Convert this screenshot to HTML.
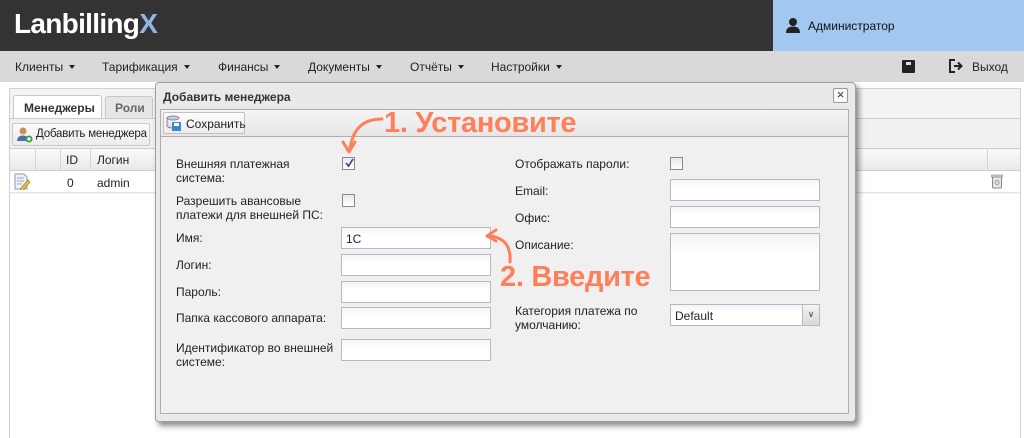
<!DOCTYPE html>
<html><head><meta charset="utf-8"><style>
*{margin:0;padding:0;box-sizing:border-box}
body{width:1024px;height:438px;overflow:hidden;background:#fff;font-family:"Liberation Sans","DejaVu Sans",sans-serif;font-size:12px;color:#222;position:relative}
.a{position:absolute;white-space:nowrap}
.hdr{left:0;top:0;width:1024px;height:51px;background:#333}
.logo{left:14px;top:8px;font-size:28px;font-weight:bold;color:#fff;letter-spacing:-0.7px}
.logo span{color:#8fb6e3}
.user{left:773px;top:0;width:251px;height:51px;background:#a3c8f0}
.nav{left:0;top:51px;width:1024px;height:31px;background:#d9d9d9}
.nav div{position:absolute;top:9px;font-size:12px;color:#222}
.caret{display:inline-block;width:0;height:0;border-left:3px solid transparent;border-right:3px solid transparent;border-top:4px solid #222;margin-left:6px;vertical-align:2px}
.lbl{position:absolute;font-size:12px;color:#222;line-height:14px;white-space:nowrap}
.inp{position:absolute;width:150px;height:22px;background:linear-gradient(#f4f4f4,#fff 40%);border:1px solid #b5b8c8}
.cb{position:absolute;width:13px;height:13px;border:1px solid #8a8a8a;background:linear-gradient(#e8e8e8,#fff)}
.ann{position:absolute;color:#ff7f5a;font-size:29px;font-weight:bold;font-family:"Liberation Sans",sans-serif;letter-spacing:-0.3px;line-height:1;white-space:nowrap}
</style></head><body>
<div class="a hdr"></div>
<div class="a logo">Lanbilling<span>X</span></div>
<div class="a user"></div>
<svg class="a" style="left:785px;top:17px" width="16" height="16" viewBox="0 0 16 16"><circle cx="8" cy="5" r="4" fill="#222"/><path d="M1 16c0-5 3-6.5 7-6.5s7 1.5 7 6.5z" fill="#222"/></svg>
<div class="a" style="left:808px;top:19px;font-size:12px;color:#111">Администратор</div>
<div class="a nav">
<div style="left:15px">Клиенты<span class="caret"></span></div>
<div style="left:102px">Тарификация<span class="caret"></span></div>
<div style="left:218px">Финансы<span class="caret"></span></div>
<div style="left:308px">Документы<span class="caret"></span></div>
<div style="left:410px">Отчёты<span class="caret"></span></div>
<div style="left:491px">Настройки<span class="caret"></span></div>
<div style="left:972px">Выход</div>
</div>
<div class="a" style="left:902px;top:60px;width:13px;height:13px;background:#222;border-radius:1px"></div>
<div class="a" style="left:906px;top:62px;width:5px;height:3px;background:#ddd"></div>
<svg class="a" style="left:948px;top:59px" width="16" height="14" viewBox="0 0 16 14"><path d="M7 1H2v12h5" fill="none" stroke="#222" stroke-width="2"/><path d="M6 7h6M10 3.5l3.5 3.5-3.5 3.5" fill="none" stroke="#222" stroke-width="2"/></svg>

<div class="a" style="left:9px;top:88px;width:1012px;height:350px;border:1px solid #d0d0d0;border-bottom:none;background:#f3f3f3"></div>
<div class="a" style="left:13px;top:95px;width:89px;height:24px;background:#fff;border:1px solid #c8c8c8;border-bottom:none;border-radius:3px 3px 0 0;font-weight:bold;font-size:12px;padding:5px 0 0 10px;color:#333">Менеджеры</div>
<div class="a" style="left:105px;top:96px;width:48px;height:22px;background:#e6e6e6;border:1px solid #c8c8c8;border-bottom:none;border-radius:3px 3px 0 0;font-weight:bold;font-size:12px;padding:4px 0 0 9px;color:#666">Роли</div>
<div class="a" style="left:10px;top:118px;width:1010px;height:30px;background:#f1f1f1;border-top:1px solid #ccc"></div>
<div class="a" style="left:12px;top:123px;width:138px;height:23px;border:1px solid #c8c8c8;border-radius:2px;background:linear-gradient(#fbfbfb,#ececec);padding:4px 0 0 23px;font-size:11.5px;letter-spacing:-0.2px">Добавить менеджера</div>
<svg class="a" style="left:16px;top:126px" width="17" height="17" viewBox="0 0 17 17"><circle cx="7" cy="5" r="3.5" fill="#c8905a"/><path d="M1 15c0-4 3-5.5 6-5.5s6 1.5 6 5.5z" fill="#4a6fa5"/><circle cx="13" cy="13" r="3.5" fill="#3aa03a"/><path d="M13 11v4M11 13h4" stroke="#fff" stroke-width="1.3"/></svg>
<div class="a" style="left:10px;top:148px;width:1010px;height:23px;background:linear-gradient(#fafafa,#e9e9e9);border-top:1px solid #ccc;border-bottom:1px solid #d0d0d0"></div>
<div class="a" style="left:35px;top:149px;width:1px;height:22px;background:#d4d4d4"></div>
<div class="a" style="left:60px;top:149px;width:1px;height:22px;background:#d4d4d4"></div>
<div class="a" style="left:90px;top:149px;width:1px;height:22px;background:#d4d4d4"></div>
<div class="a" style="left:987px;top:149px;width:1px;height:22px;background:#d4d4d4"></div>
<div class="a" style="left:66px;top:153px">ID</div>
<div class="a" style="left:97px;top:153px">Логин</div>
<div class="a" style="left:10px;top:171px;width:1010px;height:22px;background:#fff;border-bottom:1px solid #e4e4e4"></div>
<div class="a" style="left:10px;top:194px;width:1010px;height:244px;background:#fff"></div>
<svg class="a" style="left:14px;top:173px" width="16" height="17" viewBox="0 0 16 17"><path d="M1 1h9l3 3v12H1z" fill="#eef2fa" stroke="#8a9ab8"/><path d="M3 5h7M3 8h7M3 11h5" stroke="#9ab"/><path d="M7 15l7-8 2 2-7 8-3 1z" fill="#f0c040" stroke="#a07020" stroke-width=".6"/></svg>
<div class="a" style="left:67px;top:176px">0</div>
<div class="a" style="left:97px;top:176px">admin</div>
<svg class="a" style="left:991px;top:174px" width="12" height="15" viewBox="0 0 12 15"><rect x="1.5" y="3" width="9" height="11" rx="1" fill="#e8e8e8" stroke="#888"/><rect x="0.5" y="1" width="11" height="2" fill="#ccc" stroke="#888" stroke-width=".6"/><circle cx="6" cy="8.5" r="2" fill="none" stroke="#999"/></svg>

<div class="a" style="left:155px;top:82px;width:701px;height:340px;background:#e9e9e9;border:1px solid #a0a0a0;border-radius:4px;box-shadow:3px 4px 6px rgba(0,0,0,.45)"></div>
<div class="a" style="left:163px;top:90px;font-weight:bold;font-size:12px;color:#333">Добавить менеджера</div>
<div class="a" style="left:833px;top:88px;width:15px;height:15px;border:1px solid #999;border-radius:2px;background:#fafafa;font-size:13px;line-height:12px;text-align:center;color:#333">×</div>
<div class="a" style="left:160px;top:109px;width:689px;height:28px;background:linear-gradient(#f5f5f5,#e6e6e6);border:1px solid #b8a8a8;border-bottom:none"></div>
<div class="a" style="left:163px;top:112px;width:82px;height:22px;border:1px solid #c0c0c0;border-radius:2px;background:linear-gradient(#fcfcfc,#ececec);padding:4px 0 0 22px;font-size:12px">Сохранить</div>
<svg class="a" style="left:166px;top:115px" width="16" height="16" viewBox="0 0 16 16"><ellipse cx="7" cy="3" rx="6" ry="2" fill="#ccd" stroke="#889"/><path d="M1 3v8c0 1 3 2 6 2" fill="#dde" stroke="#889"/><rect x="6" y="7" width="9" height="9" fill="#3a8ad0"/><rect x="8" y="8" width="5" height="3" fill="#fff"/></svg>
<div class="a" style="left:160px;top:136px;width:689px;height:278px;background:#f0f0f0;border:1px solid #b8a8a8"></div>

<div class="lbl" style="left:176px;top:157px">Внешняя платежная<br>система:</div>
<div class="cb" style="left:342px;top:157px"></div>
<svg class="a" style="left:343px;top:157px" width="12" height="12" viewBox="0 0 12 12"><path d="M3 6l2.5 3L10 2" fill="none" stroke="#2a3f8f" stroke-width="1.6"/></svg>
<div class="lbl" style="left:176px;top:194px">Разрешить авансовые<br>платежи для внешней ПС:</div>
<div class="cb" style="left:342px;top:194px"></div>
<div class="lbl" style="left:176px;top:231px">Имя:</div>
<div class="inp" style="left:341px;top:227px;padding:4px 0 0 4px;font-size:12px">1C</div>
<div class="lbl" style="left:176px;top:258px">Логин:</div>
<div class="inp" style="left:341px;top:254px"></div>
<div class="lbl" style="left:176px;top:285px">Пароль:</div>
<div class="inp" style="left:341px;top:281px"></div>
<div class="lbl" style="left:176px;top:311px">Папка кассового аппарата:</div>
<div class="inp" style="left:341px;top:307px"></div>
<div class="lbl" style="left:176px;top:341px">Идентификатор во внешней<br>системе:</div>
<div class="inp" style="left:341px;top:339px"></div>

<div class="lbl" style="left:515px;top:157px">Отображать пароли:</div>
<div class="cb" style="left:670px;top:157px"></div>
<div class="lbl" style="left:515px;top:184px">Email:</div>
<div class="inp" style="left:670px;top:179px"></div>
<div class="lbl" style="left:515px;top:211px">Офис:</div>
<div class="inp" style="left:670px;top:206px"></div>
<div class="lbl" style="left:515px;top:238px">Описание:</div>
<div class="inp" style="left:670px;top:233px;height:58px"></div>
<div class="lbl" style="left:515px;top:304px">Категория платежа по<br>умолчанию:</div>
<div class="inp" style="left:670px;top:304px;padding:4px 0 0 4px">Default</div>
<div class="a" style="left:802px;top:305px;width:17px;height:20px;background:linear-gradient(#f4f4f4,#d8d8d8);border-left:1px solid #b5b8c8;font-size:9px;text-align:center;line-height:18px;color:#444">∨</div>

<div class="ann" style="left:384px;top:109px">1. Установите</div>
<div class="ann" style="left:500px;top:263px">2. Введите</div>
<svg class="a" style="left:330px;top:110px" width="200" height="170" viewBox="0 0 200 170">
<path d="M52 9C38 9 24 14 20 38" fill="none" stroke="#ff7f5a" stroke-width="3" stroke-linecap="round"/>
<path d="M13 32l6 10 6-10" fill="none" stroke="#ff7f5a" stroke-width="3" stroke-linecap="round" stroke-linejoin="round"/>
<path d="M180 152C181 138 176 128 160 126" fill="none" stroke="#ff7f5a" stroke-width="3" stroke-linecap="round"/>
<path d="M166 120l-9 6 9 5" fill="none" stroke="#ff7f5a" stroke-width="3" stroke-linecap="round" stroke-linejoin="round"/>
</svg>
</body></html>
